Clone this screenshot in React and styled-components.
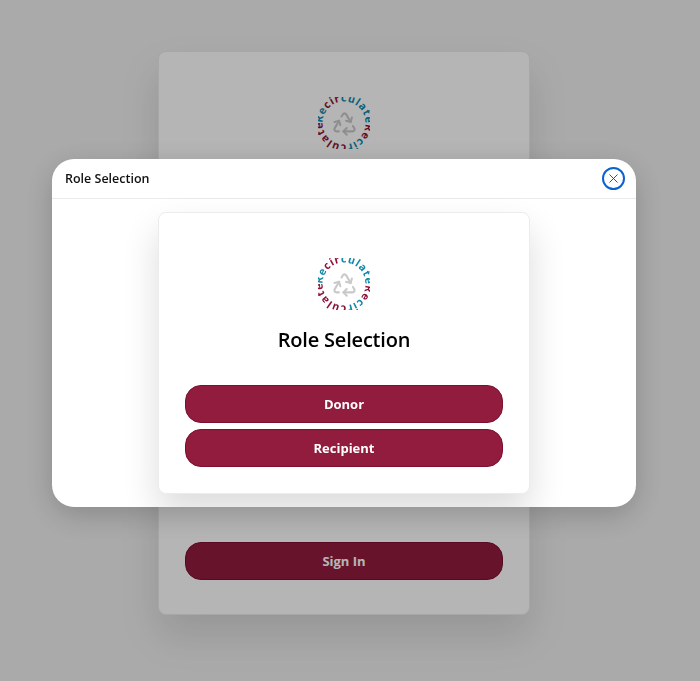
import React from 'react';
import styled, { createGlobalStyle } from 'styled-components';
import { Recycle, X } from 'lucide-react';

const GlobalStyle = createGlobalStyle`
  html, body {
    margin: 0;
    height: 100%;
    background: #f0f0f0;
    font-family: 'Open Sans', 'Noto Sans', sans-serif;
  }
`

const Page = styled.div`
  width: 688px;
  height: 681px;
  padding-top: 51px;
  box-sizing: border-box;
  display: flex;
  justify-content: center;
  align-items: flex-start;
  overflow: hidden;
`

const Card = styled.div`
  width: 372px;
  height: ${(props) => props.height}px;
  box-sizing: border-box;
  padding: 45px 26px 26px;
  background: #ffffff;
  border: 1px solid #ececec;
  border-radius: 8px;
  box-shadow: 0 20px 40px rgba(0, 0, 0, 0.12);
  display: flex;
  flex-direction: column;
  align-items: center;
`

const LogoFrame = styled.div`
  width: 52px;
  height: 52px;
  flex: none;
  position: relative;
  background: #ffffff;
  border-radius: 3px;
`

const LogoCenter = styled.div`
  position: absolute;
  inset: 0;
  display: flex;
  align-items: center;
  justify-content: center;
  color: #c9c9c9;
`

const Title = styled.h1`
  margin: 16px 0 0;
  font-size: 20px;
  line-height: 27px;
  font-weight: 600;
  color: #000000;
  letter-spacing: -0.2px;
`

const ButtonStack = styled.div`
  align-self: stretch;
  margin-top: 32px;
  display: flex;
  flex-direction: column;
  gap: 6px;
`

const Action = styled.button`
  all: unset;
  height: 38px;
  box-sizing: border-box;
  border: 1px solid #7d0f30;
  border-radius: 16px;
  background: #911c3e;
  color: #ffffff;
  font-size: 13px;
  font-weight: 700;
  text-align: center;
`

const HiddenCopy = styled.p`
  align-self: stretch;
  margin: 340px 13px 0;
  font-size: 12px;
  line-height: 16px;
  color: #117c9c;
`

const SignInWrap = styled.div`
  align-self: stretch;
  margin-top: 37px;
  display: flex;
  flex-direction: column;
`

const Overlay = styled.div`
  position: fixed;
  inset: 0;
  background: rgba(0, 0, 0, 0.29);
  padding: 159px 0 0 52px;
  box-sizing: border-box;
`

const Modal = styled.div`
  width: 584px;
  height: 348px;
  background: #ffffff;
  border-radius: 22px;
  box-shadow: 0 8px 30px rgba(0, 0, 0, 0.2);
  overflow: hidden;
  display: flex;
  flex-direction: column;
`

const ModalHeader = styled.div`
  height: 40px;
  flex: none;
  box-sizing: border-box;
  padding: 0 11px 0 13px;
  border-bottom: 1px solid #eaeaea;
  display: flex;
  align-items: center;
  justify-content: space-between;
`

const ModalTitle = styled.span`
  font-size: 12.5px;
  font-weight: 600;
  color: #111111;
`

const CloseButton = styled.button`
  all: unset;
  width: 23px;
  height: 23px;
  box-sizing: border-box;
  border: 2px solid #0a62d0;
  border-radius: 50%;
  display: flex;
  align-items: center;
  justify-content: center;
  color: #333333;
`

const ModalBody = styled.div`
  flex: 1;
  padding-top: 13px;
  display: flex;
  justify-content: center;
`

const ELEVATED = '0 18px 36px rgba(0, 0, 0, 0.14)';
const ElevatedCard = styled(Card)`
  box-shadow: ${ELEVATED};
`

function Logo({ id }) {
  const blue = '#1187ab';
  const red = '#8c1238';
  return (
    <LogoFrame>
      <LogoCenter>
        <Recycle size={27} strokeWidth={1.8} />
      </LogoCenter>
      <svg width="52" height="52" viewBox="0 0 52 52" style={{ position: 'absolute', inset: 0 }}>
        <defs>
          <path id={id} d="M 4.5 26 A 21.5 21.5 0 1 1 47.5 26 A 21.5 21.5 0 1 1 4.5 26" />
        </defs>
        <text fontFamily="'Open Sans', sans-serif" fontSize="10.6" fontWeight="700">
          <textPath href={`#${id}`} textLength="135" lengthAdjust="spacing">
            <tspan fill={blue}>Re</tspan>
            <tspan fill={red}>cir</tspan>
            <tspan fill={blue}>culate</tspan>
            <tspan fill={red}>Re</tspan>
            <tspan fill={blue}>cir</tspan>
            <tspan fill={red}>culate</tspan>
          </textPath>
        </text>
      </svg>
    </LogoFrame>
  );
}

function App() {
  return (
    <>
      <GlobalStyle />
      <Page>
        <Card height={564}>
          <Logo id="logo-ring-back" />
          <HiddenCopy>circulate.org.</HiddenCopy>
          <SignInWrap>
            <Action>Sign In</Action>
          </SignInWrap>
        </Card>
      </Page>
      <Overlay>
        <Modal>
          <ModalHeader>
            <ModalTitle>Role Selection</ModalTitle>
            <CloseButton aria-label="Close">
              <X size={15} strokeWidth={1.4} />
            </CloseButton>
          </ModalHeader>
          <ModalBody>
            <ElevatedCard height={282}>
              <Logo id="logo-ring-front" />
              <Title>Role Selection</Title>
              <ButtonStack>
                <Action>Donor</Action>
                <Action>Recipient</Action>
              </ButtonStack>
            </ElevatedCard>
          </ModalBody>
        </Modal>
      </Overlay>
    </>
  );
}

export default App
